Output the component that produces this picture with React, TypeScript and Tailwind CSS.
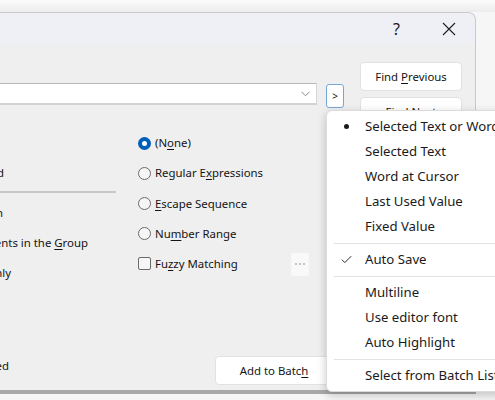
import React from 'react';

const font = { fontFamily: '"Noto Sans", "Liberation Sans", sans-serif' };

const Radio: React.FC<{ checked?: boolean }> = ({ checked }) =>
  checked ? (
    <span className="flex h-[13px] w-[13px] shrink-0 items-center justify-center rounded-full bg-[#005fb8]">
      <span className="h-[5px] w-[5px] rounded-full bg-white" />
    </span>
  ) : (
    <span className="h-[13px] w-[13px] shrink-0 rounded-full border border-[#6b6b6b] bg-[#f6f6f6]" />
  );

const MenuItem: React.FC<{ mark?: 'dot' | 'check'; children: React.ReactNode }> = ({ mark, children }) => (
  <div className="flex h-[25px] items-center whitespace-nowrap">
    <span className="flex w-[38px] justify-center pl-[1px] text-[#1a1a1a]">
      {mark === 'dot' && <span className="h-[5px] w-[5px] rounded-full bg-[#1a1a1a]" />}
      {mark === 'check' && (
        <svg width="11" height="9" viewBox="0 0 11 9" fill="none">
          <path d="M0.8 4.6 L3.8 7.6 L10.2 1.2" stroke="#2a2a2a" strokeWidth="1" />
        </svg>
      )}
    </span>
    <span className="text-[13.2px] text-[#1a1a1a]">{children}</span>
  </div>
);

const Sep = () => <div className="my-[3.5px] ml-[7px] h-px bg-[#e3e3e3]" />;

export default function App() {
  return (
    <div className="relative h-[400px] w-[495px] overflow-hidden bg-[#f6f6f6]" style={font}>
      <div className="h-[12px] bg-gradient-to-b from-[#fbfbfb] to-[#ececec]" />
      {/* dialog */}
      <div className="flex h-[382px] w-[476px] flex-col overflow-hidden rounded-tr-[8px] border-t border-r border-b-4 border-[#c9c9c9] border-b-[#a9a9a9] bg-[#efefef]">
        <div className="flex h-[31px] shrink-0 items-center justify-end bg-[#eff0f6] pr-[19px]">
          <span className="mr-[42px] text-[16px] leading-none text-[#1a1a1a]">?</span>
          <svg width="14" height="14" viewBox="0 0 14 14" fill="none">
            <path d="M1 1 L13 13 M13 1 L1 13" stroke="#1f1f1f" strokeWidth="1.1" />
          </svg>
        </div>

        <div className="flex flex-1">
          {/* main area */}
          <div className="flex w-[344px] flex-col pt-[39px] text-[11.4px] text-[#141414]">
            <div className="flex items-start gap-[9px]">
              <div className="flex h-[22px] w-[317px] items-center justify-end border-t border-r border-b-2 border-t-[#b8b8b8] border-r-[#d6d6d6] border-b-[#d2d2d2] bg-white pr-[6px]">
                <svg width="9" height="6" viewBox="0 0 9 6" fill="none">
                  <path d="M0.5 0.8 L4.5 4.8 L8.5 0.8" stroke="#8a8a8a" strokeWidth="1" />
                </svg>
              </div>
              <div className="mt-[1px] flex h-[24px] w-[18px] items-center justify-center rounded-[3px] border border-[#74a6d9] bg-white text-[10px]">
                &gt;
              </div>
            </div>

            <div className="mt-[20px] flex">
              {/* left list, clipped on the left */}
              <div className="flex w-[116px] flex-col">
                <div className="h-[30px]" />
                <div className="flex h-[30px] items-center justify-end whitespace-nowrap pr-[112px]">Match Whole Word</div>
                <div className="mt-[3px] h-[2px] bg-[#c8c8c8]" />
                <div className="mt-[5px] flex h-[30px] items-center justify-end whitespace-nowrap pr-[113px]">In Selection</div>
                <div className="flex h-[30px] items-center justify-end whitespace-nowrap pr-[28px]">
                  <span>
                    All Documents in the <u className="underline-offset-2">G</u>roup
                  </span>
                </div>
                <div className="flex h-[30px] items-center justify-end whitespace-nowrap pr-[105px]">Current Document Only</div>
              </div>

              {/* options */}
              <div className="ml-[22px] flex w-[171px] flex-col">
                <div className="flex h-[30px] items-center gap-[4px]">
                  <Radio checked />
                  <span>
                    (N<u className="underline-offset-2">o</u>ne)
                  </span>
                </div>
                <div className="flex h-[30px] items-center gap-[4px]">
                  <Radio />
                  <span>
                    Regular E<u className="underline-offset-2">x</u>pressions
                  </span>
                </div>
                <div className="flex h-[30.5px] items-center gap-[4px]">
                  <Radio />
                  <span>
                    <u className="underline-offset-2">E</u>scape Sequence
                  </span>
                </div>
                <div className="flex h-[30.5px] items-center gap-[4px]">
                  <Radio />
                  <span>
                    Nu<u className="underline-offset-2">m</u>ber Range
                  </span>
                </div>
                <div className="flex h-[30px] items-center justify-between">
                  <div className="flex items-center gap-[4px]">
                    <span className="h-[13px] w-[13px] rounded-[2px] border border-[#6b6b6b] bg-[#f6f6f6]" />
                    <span>
                      Fu<u className="underline-offset-2">z</u>zy Matching
                    </span>
                  </div>
                  <div className="flex h-[23px] w-[18px] items-center justify-center gap-[2px] rounded-[3px] bg-[#f9f9f9]">
                    <span className="h-[2px] w-[2px] bg-[#c4c4c4]" />
                    <span className="h-[2px] w-[2px] bg-[#c4c4c4]" />
                    <span className="h-[2px] w-[2px] bg-[#c4c4c4]" />
                  </div>
                </div>
              </div>
            </div>

            {/* bottom row */}
            <div className="mt-auto mb-[5px] flex items-start">
              <div className="flex w-[116px] justify-end whitespace-nowrap pt-[1px] pr-[107px]">Keep Dialog Opened</div>
              <div className="ml-[99px] flex h-[29px] w-[118px] items-center justify-center rounded-[4px] border border-[#e2e2e2] bg-white">
                <span>
                  Add to Batc<u className="underline-offset-2">h</u>
                </span>
              </div>
            </div>
          </div>

          {/* button column */}
          <div className="ml-[16px] flex w-[102px] flex-col gap-[6px] pt-[18px] text-[11.4px] text-[#141414]">
            <div className="flex h-[29px] items-center justify-center rounded-[4px] border border-[#e2e2e2] bg-white">
              <span>
                Find <u className="underline-offset-2">P</u>revious
              </span>
            </div>
            <div className="flex h-[29px] items-start justify-center rounded-[4px] border border-[#e2e2e2] bg-white pt-[5px]">
              <span>
                Find <u className="underline-offset-2">N</u>ext
              </span>
            </div>
          </div>
        </div>
      </div>

      {/* popup menu */}
      <div className="absolute top-[110px] left-[326px] w-[190px] rounded-[6px] border border-[#dcdcdc] bg-white py-[3px] shadow-[0_3px_10px_rgba(0,0,0,0.22)]">
        <MenuItem mark="dot">Selected Text or Word</MenuItem>
        <MenuItem>Selected Text</MenuItem>
        <MenuItem>Word at Cursor</MenuItem>
        <MenuItem>Last Used Value</MenuItem>
        <MenuItem>Fixed Value</MenuItem>
        <Sep />
        <MenuItem mark="check">Auto Save</MenuItem>
        <Sep />
        <MenuItem>Multiline</MenuItem>
        <MenuItem>Use editor font</MenuItem>
        <MenuItem>Auto Highlight</MenuItem>
        <Sep />
        <MenuItem>Select from Batch List</MenuItem>
      </div>
    </div>
  );
}
